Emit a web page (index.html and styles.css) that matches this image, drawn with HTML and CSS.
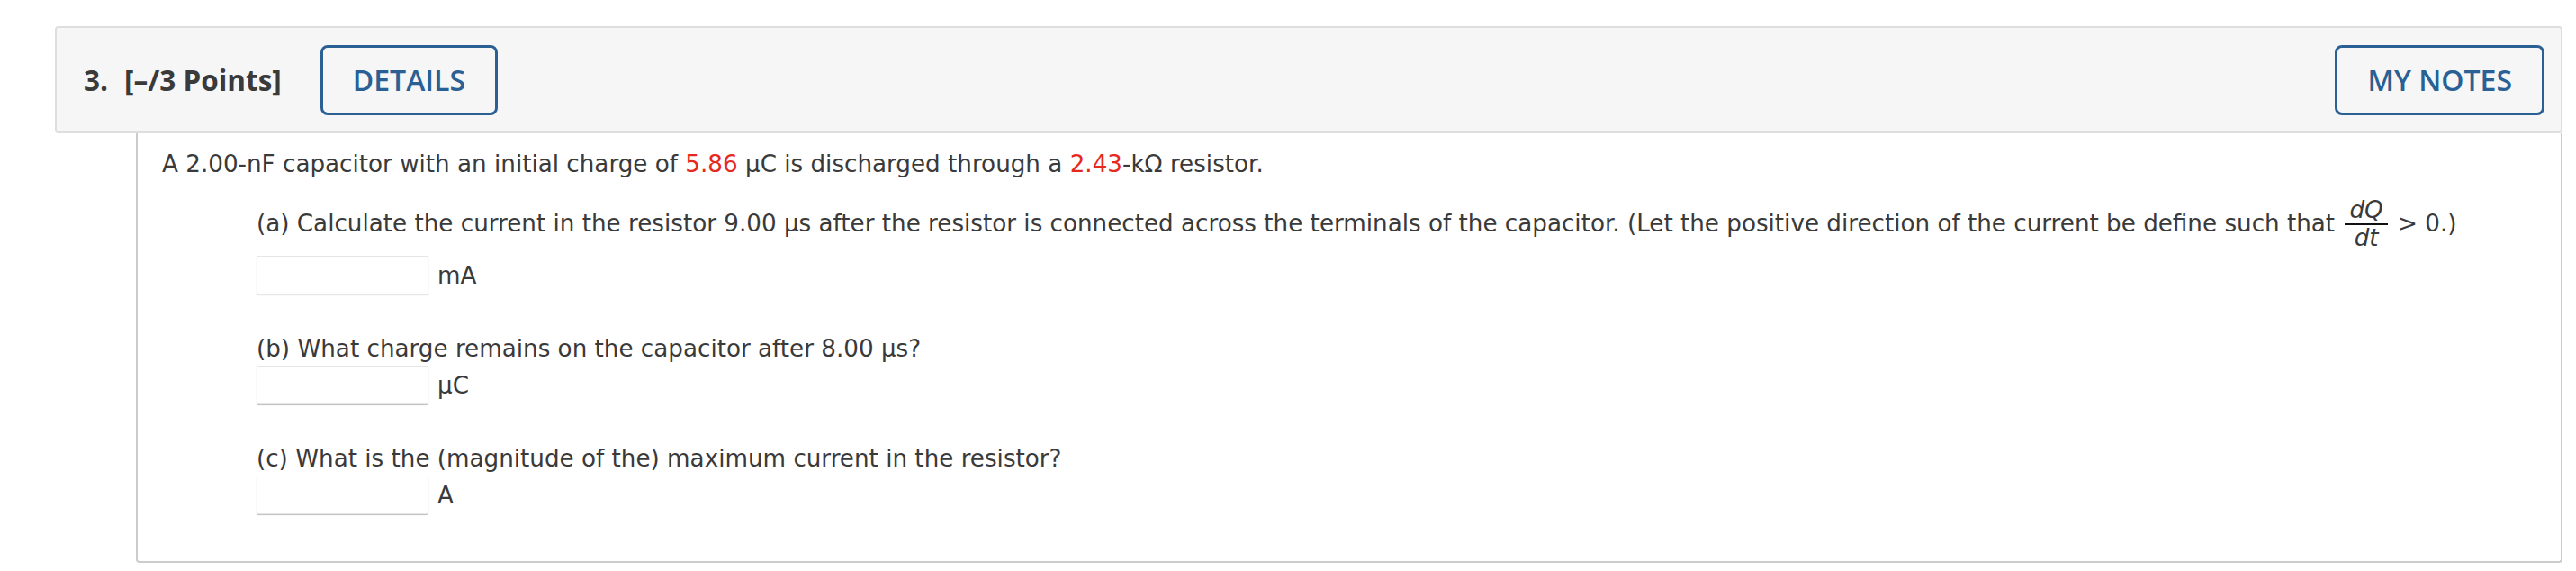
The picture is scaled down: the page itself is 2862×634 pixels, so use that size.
FILE: index.html
```html
<!DOCTYPE html>
<html lang="en">
<head>
<meta charset="utf-8">
<title>Question 3</title>
<link rel="stylesheet" href="styles.css">
</head>
<body>
<div class="question">
  <div class="q-header">
    <span class="q-num">3.</span>
    <span class="q-points">[–/3 Points]</span>
    <button class="q-btn">DETAILS</button>
    <span class="spacer"></span>
    <button class="q-btn">MY NOTES</button>
  </div>
  <div class="q-body">
    <p class="intro">A 2.00-nF capacitor with an initial charge of <span class="red">5.86</span> μC is discharged through a <span class="red">2.43</span>-kΩ resistor.</p>
    <div class="part part-a">
      <p class="prompt">(a) Calculate the current in the resistor 9.00 μs after the resistor is connected across the terminals of the capacitor. (Let the positive direction of the current be define such that <span class="frac"><span class="num">dQ</span><span class="den">dt</span></span> &gt; 0.)</p>
      <div class="answer"><span class="box"></span><span class="unit">mA</span></div>
    </div>
    <div class="part">
      <p class="prompt">(b) What charge remains on the capacitor after 8.00 μs?</p>
      <div class="answer"><span class="box"></span><span class="unit">μC</span></div>
    </div>
    <div class="part">
      <p class="prompt">(c) What is the (magnitude of the) maximum current in the resistor?</p>
      <div class="answer"><span class="box"></span><span class="unit">A</span></div>
    </div>
  </div>
</div>
</body>
</html>
```
FILE: styles.css
```css
html, body {
  margin: 0;
  padding: 0;
  background: #ffffff;
}

body {
  font-family: "DejaVu Sans", Verdana, sans-serif;
  color: #3a3a3a;
}

.question {
  margin: 29px 15px 0 61px;
}

.q-header {
  display: flex;
  align-items: center;
  height: 115px;
  padding: 0 18px 0 30px;
  background: #f6f6f6;
  border: 2px solid #dedede;
  border-radius: 4px;
  font-family: "Open Sans", "Liberation Sans", sans-serif;
}

.q-num,
.q-points {
  font-size: 31.5px;
  font-weight: 700;
  color: #3a3a3a;
}

.q-num {
  margin-right: 18px;
}

.q-points {
  margin-right: 43px;
}

.spacer {
  flex: 1;
}

.q-btn {
  box-sizing: border-box;
  height: 78px;
  padding: 0 33px;
  background: transparent;
  border: 3px solid #2a6094;
  border-radius: 8px;
  color: #2a6094;
  font-family: "Open Sans", "Liberation Sans", sans-serif;
  font-size: 32px;
  font-weight: 600;
}

.q-body {
  margin-left: 90px;
  padding: 16px 27px 52px;
  border: 2px solid #cccccc;
  border-top: none;
  border-radius: 0 0 4px 4px;
  font-size: 26.2px;
  line-height: 36px;
}

.intro,
.prompt {
  margin: 0;
}

.red {
  color: #e5291d;
}

.part {
  margin: 19px 0 0 105px;
}

.part + .part {
  margin-top: 42px;
}

.frac {
  display: inline-flex;
  flex-direction: column;
  align-items: center;
  vertical-align: middle;
  font-style: italic;
  line-height: 29px;
  margin: 0 3px;
}

.frac .num {
  padding: 0 5px;
  border-bottom: 2px solid #111;
}

.frac .den {
  padding: 0 5px;
}

.answer {
  display: flex;
  align-items: center;
  margin-top: 1px;
}

.part-a .answer {
  margin-top: 5px;
}

.box {
  box-sizing: border-box;
  width: 191px;
  height: 43px;
  background: #fff;
  border: 1px solid #e6e6e6;
  border-radius: 2px;
  box-shadow: 0 1px 1px #bdbdbd;
}

.unit {
  margin-left: 10px;
}
```
